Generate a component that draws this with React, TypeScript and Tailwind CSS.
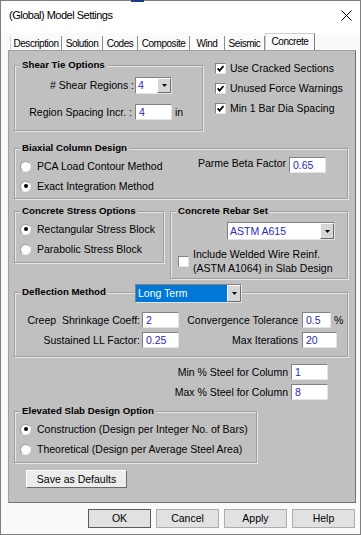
import type { ReactNode } from 'react'

const font = "font-['Liberation_Sans',Arial,sans-serif]"
const sunken = 'border border-t-[#828282] border-l-[#828282] border-b-[#e3e3e3] border-r-[#e3e3e3]'

function Group({ title, className, children }: { title: string; className?: string; children?: ReactNode }) {
    return (
        <div className={`relative border border-[#a0a0a0] shadow-[inset_1px_1px_0_#e6e6e6,1px_1px_0_#e6e6e6] ${className ?? ''}`}>
            <span className="absolute left-[5px] top-[-8px] bg-[#c0c0c0] px-[2px] text-[9.7px] font-bold leading-[13px] text-black">
                {title}
            </span>
            {children}
        </div>
    )
}

function Field({ value, className }: { value: string; className?: string }) {
    return (
        <div className={`flex h-[16px] items-center bg-white pl-[3px] text-[10.5px] text-[#2b2bb8] ${sunken} ${className ?? 'w-[37px]'}`}>
            {value}
        </div>
    )
}

function Check({ checked }: { checked?: boolean }) {
    return (
        <span className={`flex h-[11px] w-[11px] shrink-0 items-center justify-center bg-white ${sunken}`}>
            {checked && (
                <svg width="7" height="7" viewBox="0 0 7 7">
                    <path d="M0.6 3.4 L2.6 5.6 L6.5 1" stroke="#000" strokeWidth="1.7" fill="none" />
                </svg>
            )}
        </span>
    )
}

function Radio({ on }: { on?: boolean }) {
    return (
        <span className="flex h-[11px] w-[11px] shrink-0 items-center justify-center rounded-full border border-[#9a9a9a] border-b-[#ececec] border-r-[#ececec] bg-white">
            {on && <span className="h-[4px] w-[4px] rounded-full bg-black" />}
        </span>
    )
}

function RadioRow({ label, on }: { label: string; on?: boolean }) {
    return (
        <div className="flex h-[20px] items-center gap-[6px]">
            <Radio on={on} />
            <span>{label}</span>
        </div>
    )
}

function Drop({ value, className, blue }: { value: string; className?: string; blue?: boolean }) {
    return (
        <div className={`flex bg-white ${sunken} ${className ?? ''}`}>
            <div className={`flex flex-1 items-center pl-[2px] text-[10.5px] ${blue ? 'bg-[#0078d7] text-white' : 'text-[#2b2bb8]'}`}>
                {value}
            </div>
            <div className="flex w-[14px] items-center justify-center border border-t-white border-l-white border-b-[#6e6e6e] border-r-[#6e6e6e] bg-[#d6d6d6]">
                <svg width="5" height="3" viewBox="0 0 5 3">
                    <path d="M0 0H5L2.5 3Z" fill="#000" />
                </svg>
            </div>
        </div>
    )
}

function Tab({ label, className }: { label: string; className: string }) {
    return (
        <div className={`flex h-[14px] items-center justify-center border-r border-[#8c8c8c] ${className}`}>
            {label}
        </div>
    )
}

function DialogButton({ label, isDefault }: { label: string; isDefault?: boolean }) {
    return (
        <button
            type="button"
            className={`flex h-[19px] w-[63px] items-center justify-center border bg-[#e1e1e1] text-[10.5px] text-black ${isDefault ? 'border-[#5a5a5a]' : 'border-[#adadad]'}`}
        >
            {label}
        </button>
    )
}

function App() {
    return (
        <div className={`relative flex h-[535px] w-[361px] flex-col border border-[#7f7f7f] bg-[#fafafa] text-[10.5px] leading-[13px] text-black ${font}`}>
            <div className="absolute left-[130px] top-[-1px] h-[2px] w-[13px] bg-[#1b3c8c]" />

            {/* title bar */}
            <div className="flex h-[32px] shrink-0 items-start justify-between bg-white pl-[8px] pr-[7px] pt-[7px]">
                <span className="text-[11px] leading-[14px] tracking-[-0.5px]">(Global) Model Settings</span>
                <svg width="11" height="11" viewBox="0 0 11 11" className="mr-[1px] mt-[2px]">
                    <path d="M0.5 0.5 L10.5 10.5 M10.5 0.5 L0.5 10.5" stroke="#000" strokeWidth="1" />
                </svg>
            </div>

            {/* tabs */}
            <div className="ml-[9px] flex h-[17px] shrink-0 items-end text-[10px] tracking-[-0.45px]">
                <Tab label="Description" className="w-[52px] border-l border-l-[#d4d4d4]" />
                <Tab label="Solution" className="w-[41px]" />
                <Tab label="Codes" className="w-[35px]" />
                <Tab label="Composite" className="w-[52px]" />
                <Tab label="Wind" className="w-[35px]" />
                <Tab label="Seismic" className="w-[40px]" />
                <div className="flex h-[17px] w-[50px] items-center justify-center border border-b-0 border-[#cfcfcf] border-r-[#7a7a7a] bg-[#fafafa] pb-[1px]">
                    Concrete
                </div>
            </div>

            {/* panel */}
            <div className="ml-[7px] mr-[4px] flex h-[453px] shrink-0 flex-col border border-[#a0a0a0] border-b-[#707070] border-r-[#707070] bg-[#c0c0c0] pl-[5px] pr-[7px] pt-[7px]">
                <div className="flex items-start">
                    <Group title="Shear Tie Options" className="mt-[7px] h-[66px] w-[189px] pt-[11px]">
                        <div className="flex h-[17px] items-center">
                            <span className="w-[119px] text-right">#&nbsp;Shear Regions :</span>
                            <Drop value="4" className="ml-[1px] h-[17px] w-[37px]" />
                        </div>
                        <div className="mt-[10px] flex h-[16px] items-center">
                            <span className="w-[117px] text-right">Region Spacing Incr. :</span>
                            <Field value="4" className="ml-[3px] w-[37px]" />
                            <span className="ml-[3px]">in</span>
                        </div>
                    </Group>
                    <div className="ml-[12px] flex flex-col">
                        {['Use Cracked Sections', 'Unused Force Warnings', 'Min 1 Bar Dia Spacing'].map((t) => (
                            <div key={t} className="flex h-[20px] items-center gap-[4px]">
                                <Check checked />
                                <span>{t}</span>
                            </div>
                        ))}
                    </div>
                </div>

                <Group title="Biaxial Column Design" className="mt-[17px] flex h-[51px] w-[334px]">
                    <div className="flex-1 pl-[5px] pt-[7px]">
                        <RadioRow label="PCA Load Contour Method" />
                        <RadioRow label="Exact Integration Method" on />
                    </div>
                    <div className="mr-[21px] mt-[8px] flex h-[16px] items-center">
                        <span className="mb-[3px]">Parme Beta Factor</span>
                        <Field value="0.65" className="ml-[3px] w-[37px]" />
                    </div>
                </Group>

                <div className="mt-[12px] flex items-start">
                    <Group title="Concrete Stress Options" className="h-[52px] w-[150px] pl-[5px] pt-[7px]">
                        <RadioRow label="Rectangular Stress Block" on />
                        <RadioRow label="Parabolic Stress Block" />
                    </Group>
                    <Group title="Concrete Rebar Set" className="ml-[6px] h-[68px] w-[178px] pt-[10px]">
                        <Drop value="ASTM A615" className="ml-[56px] h-[18px] w-[108px]" />
                        <div className="ml-[7px] mt-[7px] flex items-center gap-[4px]">
                            <Check />
                            <span className="leading-[14px]">
                                Include Welded Wire Reinf.
                                <br />
                                (ASTM A1064) in Slab Design
                            </span>
                        </div>
                    </Group>
                </div>

                <Group title="Deflection Method" className="mt-[13px] h-[65px] w-[334px] pt-[19px]">
                    <Drop value="Long Term" blue className="absolute left-[120px] top-[-9px] h-[19px] w-[107px]" />
                    <div className="flex h-[16px] items-center">
                        <span className="w-[125px] text-right">Creep&nbsp; Shrinkage Coeff:</span>
                        <Field value="2" className="ml-[2px] w-[37px]" />
                        <span className="w-[119px] text-right">Convergence Tolerance</span>
                        <Field value="0.5" className="ml-[4px] w-[29px]" />
                        <span className="ml-[3px]">%</span>
                    </div>
                    <div className="mt-[4px] flex h-[16px] items-center">
                        <span className="w-[125px] text-right">Sustained LL Factor:</span>
                        <Field value="0.25" className="ml-[2px] w-[37px]" />
                        <span className="w-[119px] text-right">Max Iterations</span>
                        <Field value="20" className="ml-[4px] w-[35px]" />
                    </div>
                </Group>

                <div className="mr-[20px] mt-[7px] flex flex-col items-end gap-[4px]">
                    <div className="flex h-[16px] items-center">
                        <span>Min % Steel for Column</span>
                        <Field value="1" className="ml-[3px] w-[37px]" />
                    </div>
                    <div className="flex h-[16px] items-center">
                        <span>Max % Steel for Column</span>
                        <Field value="8" className="ml-[3px] w-[37px]" />
                    </div>
                </div>

                <Group title="Elevated Slab Design Option" className="mt-[11px] h-[52px] w-[243px] pl-[5px] pt-[7px]">
                    <RadioRow label="Construction (Design per Integer No. of Bars)" on />
                    <RadioRow label="Theoretical (Design per Average Steel Area)" />
                </Group>

                <button
                    type="button"
                    className="ml-[12px] mt-[7px] flex h-[18px] w-[101px] items-center justify-center border border-t-white border-l-white border-b-[#6a6a6a] border-r-[#6a6a6a] bg-[#ececec] text-[10.5px] text-black"
                >
                    Save as Defaults
                </button>
            </div>

            {/* dialog buttons */}
            <div className="flex justify-end gap-[5px] pr-[5px] pt-[6px]">
                <DialogButton label="OK" isDefault />
                <DialogButton label="Cancel" />
                <DialogButton label="Apply" />
                <DialogButton label="Help" />
            </div>
        </div>
    )
}

export default App
